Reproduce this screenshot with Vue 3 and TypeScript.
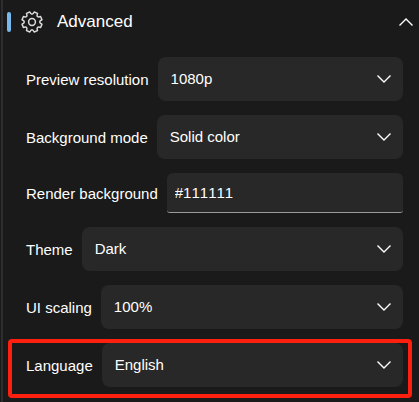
<script setup lang="ts">
import { ref } from 'vue'

interface Setting {
  id: string
  label: string
  kind: 'select' | 'text'
  value: string
  options: string[]
  highlighted?: boolean
}

const open = ref(true)

const settings = ref<Setting[]>([
  { id: 'resolution', label: 'Preview resolution', kind: 'select', value: '1080p', options: ['720p', '1080p', '1440p'] },
  { id: 'mode', label: 'Background mode', kind: 'select', value: 'Solid color', options: ['Solid color', 'Transparent'] },
  { id: 'background', label: 'Render background', kind: 'text', value: '#111111', options: [] },
  { id: 'theme', label: 'Theme', kind: 'select', value: 'Dark', options: ['Dark', 'Light'] },
  { id: 'scaling', label: 'UI scaling', kind: 'select', value: '100%', options: ['100%', '125%', '150%'] },
  { id: 'language', label: 'Language', kind: 'select', value: 'English', options: ['English', 'Deutsch'], highlighted: true },
])

// Eight-toothed gear outline centred on 0,0, with rounded valleys at the compass points.
function polar(degrees: number, radius: number): string {
  const angle = (degrees * Math.PI) / 180
  return `${(radius * Math.sin(angle)).toFixed(2)} ${(-radius * Math.cos(angle)).toFixed(2)}`
}
function gearPath(): string {
  let d = ''
  for (let tooth = 0; tooth < 8; tooth++) {
    const middle = tooth * 45 + 22.5
    d += `${tooth ? 'L' : 'M'}${polar(middle - 10, 10.2)}`
    d += `L${polar(middle + 10, 10.2)}`
    d += `C${polar(middle + 16, 7)} ${polar(middle + 29, 7)} ${polar(middle + 35, 10.2)}`
  }
  return `${d}Z`
}
const gear = gearPath()
</script>

<template>
  <section class="panel">
    <button class="header" type="button" :aria-expanded="open" @click="open = !open">
      <span class="accent"></span>
      <svg class="gear" viewBox="-11 -11 22 22" aria-hidden="true">
        <path :d="gear" />
        <circle r="3.4" />
      </svg>
      <span class="title">Advanced</span>
      <svg class="chevron" :class="{ up: open }" viewBox="0 0 16 10" aria-hidden="true">
        <path d="M1.5 1.5L8 8L14.5 1.5" />
      </svg>
    </button>
    <div v-if="open" class="rows">
      <div v-for="s in settings" :key="s.id" class="row" :class="{ highlighted: s.highlighted }">
        <label :for="s.id">{{ s.label }}</label>
        <div v-if="s.kind === 'select'" class="field">
          <select :id="s.id" v-model="s.value">
            <option v-for="o in s.options" :key="o">{{ o }}</option>
          </select>
          <svg class="chevron" viewBox="0 0 16 10" aria-hidden="true">
            <path d="M1.5 1.5L8 8L14.5 1.5" />
          </svg>
        </div>
        <input v-else :id="s.id" v-model="s.value" type="text" />
      </div>
    </div>
  </section>
</template>

<style>
body {
  background: #1a1a1a;
}
</style>

<style scoped>
.panel {
  box-sizing: border-box;
  min-height: 100vh;
  margin-left: 1px;
  border-left: 2px solid #2e2e2e;
  color: #fff;
  font-family: "Liberation Sans", Arial, sans-serif;
  font-size: 15px;
  overflow: hidden;
}
.panel,
.header,
select,
input {
  font-kerning: none;
}
.header {
  display: flex;
  align-items: center;
  width: 100%;
  height: 44px;
  padding: 0 5px 0 4px;
  border: 0;
  background: none;
  color: inherit;
  font-family: inherit;
  font-size: 17px;
  text-align: left;
}
.accent {
  width: 4px;
  height: 20px;
  border-radius: 2px;
  background: #76b9ed;
}
.gear {
  width: 22px;
  height: 22px;
  margin: 0 14px 0 10px;
  fill: none;
  stroke: #dcdcdc;
  stroke-width: 1.5;
  stroke-linejoin: round;
}
.title {
  flex: 1;
}
.chevron {
  width: 16px;
  height: 10px;
  fill: none;
  stroke: #fff;
  stroke-width: 1.4;
  pointer-events: none;
}
.up {
  transform: rotate(180deg);
}
.rows {
  display: flex;
  flex-direction: column;
  gap: 14px;
  padding: 13px 16px 14px 23px;
}
.row {
  position: relative;
  display: flex;
  align-items: center;
  gap: 9px;
}
label {
  padding-top: 1px;
  white-space: nowrap;
}
.field {
  flex: 1;
  display: grid;
  align-items: center;
  min-width: 0;
}
.field > * {
  grid-area: 1 / 1;
}
.field .chevron {
  justify-self: end;
  margin-right: 11px;
}
select,
input {
  box-sizing: border-box;
  min-width: 0;
  margin: 0;
  border: 0;
  background: #282828;
  color: inherit;
  font-family: inherit;
  font-size: inherit;
  outline: none;
}
select {
  appearance: none;
  width: 100%;
  height: 44px;
  padding: 0 40px 2px 13px;
  border-radius: 8px;
}
input {
  flex: 1;
  height: 40px;
  padding: 0 8px 1px;
  border-bottom: 1px solid #9a9a9a;
  border-radius: 6px 6px 3px 3px;
}
.highlighted::after {
  content: "";
  position: absolute;
  inset: -4px -9px -11px -18px;
  border: 4px solid #ff1f0f;
  border-radius: 4px;
  pointer-events: none;
}
</style>
